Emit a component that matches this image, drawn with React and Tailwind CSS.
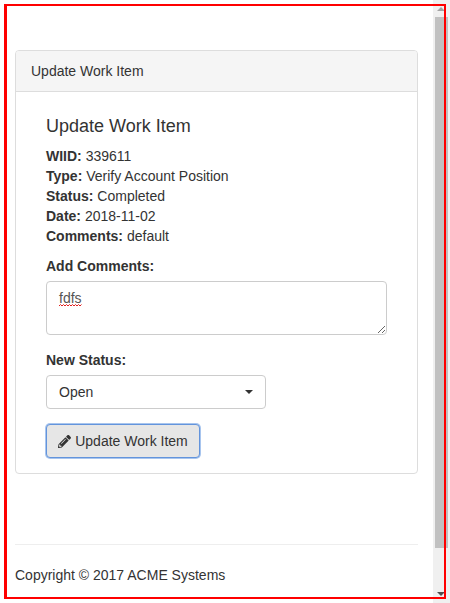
import React from 'react';
import { FaPencilAlt } from 'react-icons/fa';

function Field({ label, value }) {
  return (
    <div className="h-5 leading-5">
      <b className="font-bold">{label}:</b> {value}
    </div>
  );
}

function Scrollbar() {
  return (
    <div className="flex h-full w-[17px] shrink-0 flex-col items-center bg-[#f0f0f0]">
      <div className="flex h-[17px] w-full shrink-0 items-center justify-center pr-[1px]">
        <div className="h-0 w-0 border-x-[4px] border-b-[4px] border-x-transparent border-b-[#a3a3a3]" />
      </div>
      <div className="h-[531px] w-[13px] shrink-0 bg-[#c1c1c1]" />
      <div className="flex h-[55px] w-full items-end justify-center pb-[7px] pr-[1px]">
        <div className="h-0 w-0 border-x-[4px] border-t-[4px] border-x-transparent border-t-[#505050]" />
      </div>
    </div>
  );
}

export default function App() {
  return (
    <div className="relative flex h-[603px] w-[450px] overflow-hidden bg-white font-['Liberation_Sans',Arial,sans-serif] text-[14px] text-[#333]">
      <main className="w-[433px] shrink-0 px-[15px] pt-[50px]">
        <section className="h-[424px] w-[403px] rounded border border-[#ddd]">
          <div className="flex h-[41px] items-center rounded-t-[3px] border-b border-[#ddd] bg-[#f5f5f5] px-[15px]">
            Update Work Item
          </div>
          <div className="px-[30px] pt-[22px]">
            <h3 className="mb-[8px] text-[18px] leading-[24px] font-normal">Update Work Item</h3>
            <Field label="WIID" value="339611" />
            <Field label="Type" value="Verify Account Position" />
            <Field label="Status" value="Completed" />
            <Field label="Date" value="2018-11-02" />
            <Field label="Comments" value="default" />

            <label className="mt-[10px] mb-[5px] block h-5 leading-5 font-bold">Add Comments:</label>
            <div className="relative h-[54px] w-[341px]">
              <textarea
                defaultValue="fdfs"
                spellCheck={false}
                className="block h-[54px] w-[341px] rounded border border-[#ccc] px-3 py-[6px] leading-5 text-[#555] outline-none"
              />
              <svg className="absolute top-[23px] left-[13px]" width="23" height="3" viewBox="0 0 23 3">
                <path d="M0 2 L1.5 0.5 L3 2 L4.5 0.5 L6 2 L7.5 0.5 L9 2 L10.5 0.5 L12 2 L13.5 0.5 L15 2 L16.5 0.5 L18 2 L19.5 0.5 L21 2 L22.5 0.5" fill="none" stroke="#e02020" strokeWidth="1" />
              </svg>
            </div>

            <label className="mt-[15px] mb-[5px] block h-5 leading-5 font-bold">New Status:</label>
            <div className="relative h-[34px] w-[220px]">
              <select className="block h-[34px] w-[220px] appearance-none rounded border border-[#ccc] bg-white px-3 text-[#333] outline-none">
                <option>Open</option>
                <option>Completed</option>
              </select>
              <div className="pointer-events-none absolute top-[15px] right-[13px] h-0 w-0 border-x-[4px] border-t-[4px] border-x-transparent border-t-[#333]" />
            </div>

            <button className="mt-[15px] flex h-[34px] w-[154px] items-center justify-center gap-[4px] rounded border border-[#6394dc] bg-[#e6e6e6] text-[#333] shadow-[0_0_0_1px_#a8c5ee]">
              <FaPencilAlt className="text-[13px]" />
              Update Work Item
            </button>
          </div>
        </section>
        <footer className="mt-[70px] border-t border-[#eee] pt-[20px] leading-5">
          Copyright © 2017 ACME Systems
        </footer>
      </main>
      <Scrollbar />
      <div className="pointer-events-none absolute top-[4px] left-[4px] h-[595px] w-[442px] border-2 border-l-[3px] border-[#f00]" />
    </div>
  );
}
